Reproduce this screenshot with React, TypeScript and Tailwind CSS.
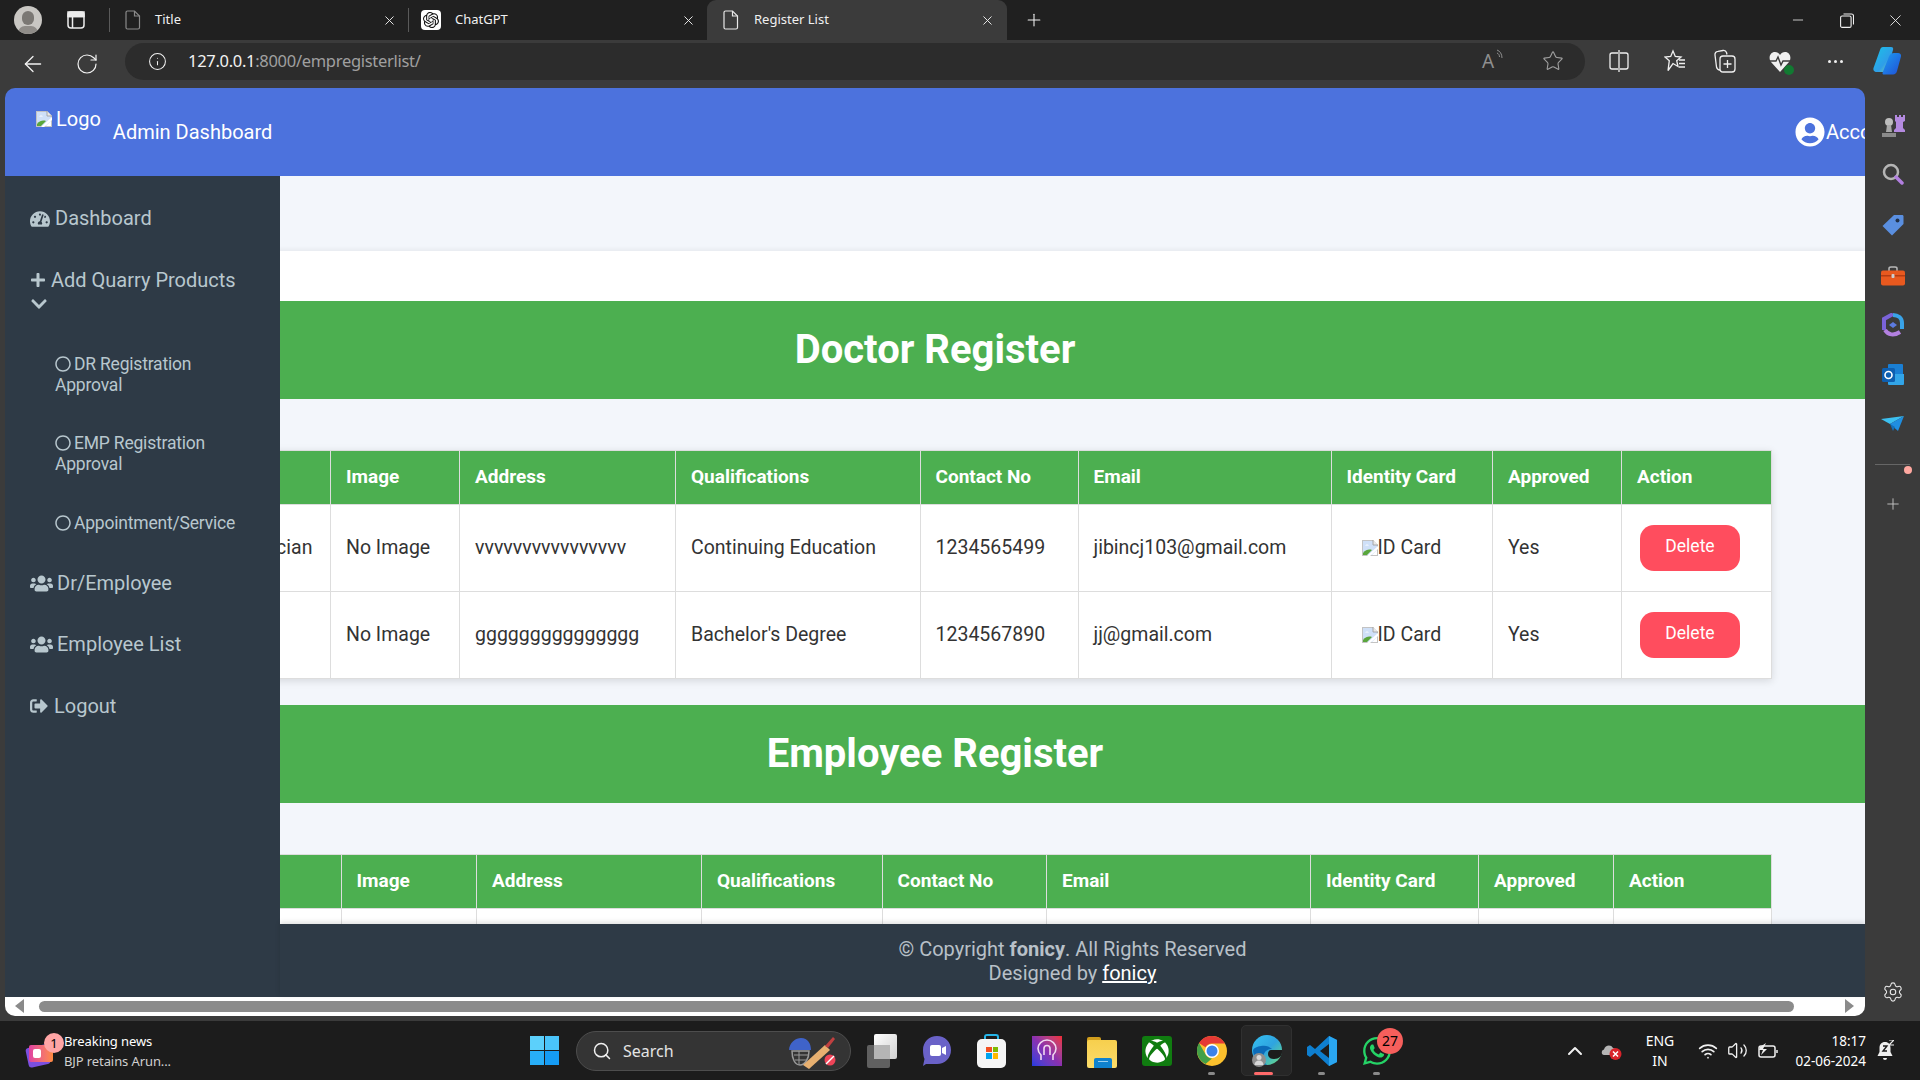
import { FaTachometerAlt, FaPlus, FaChevronDown, FaRegCircle, FaUsers, FaSignOutAlt, FaUserCircle, FaWhatsapp, FaXbox } from "react-icons/fa";
import { SiOpenai } from "react-icons/si";
import { ArrowLeft, RotateCw, Info, Star, X, Plus, Minus, Search, ChevronUp, Settings, Wifi, Volume2 } from "lucide-react";
import type { ReactNode } from "react";

function DocIcon({ dim }: { dim?: boolean }) {
  return (
    <svg width="16" height="20" viewBox="0 0 16 20" fill="none" stroke={dim ? "#8a8a8a" : "#e8e8e8"} strokeWidth="1.2">
      <path d="M2.5 1h7L14.5 6v11.5a1.5 1.5 0 0 1-1.5 1.5H2.5A1.5 1.5 0 0 1 1 17.500V2.500A1.500 1.500 0 0 1 2.500 1Z" />
      <path d="M9.500 1v5h5" />
    </svg>
  );
}

function BrokenImg() {
  return (
    <svg width="16" height="16" viewBox="0 0 16 16" className="inline-block shrink-0">
      <path d="M0 0h11l5 5v11H0Z" fill="#c3c3c3" />
      <path d="M1 1h9.500L15 5.500V15H1Z" fill="#cfe0f8" />
      <path d="M3 5.500c1-1.500 3-1.500 4 0Z" fill="#fff" />
      <path d="M1 15v-2c3-3.500 6-4 9-3l-5 5Z" fill="#5aa63c" />
      <path d="M10 15l5-5v5Z" fill="#fff" />
      <path d="M5 16 16 6v3L8 16Z" fill="#fff" />
      <path d="M11 0v5h5" fill="#e8e8e8" stroke="#9a9a9a" strokeWidth="0.8" />
    </svg>
  );
}

function Copilot() {
  return (
    <svg width="30" height="30" viewBox="0 0 30 30">
      <defs>
        <linearGradient id="cpa" x1="0" y1="0" x2="1" y2="1"><stop offset="0" stopColor="#19c3e8" /><stop offset="0.6" stopColor="#2f9ee8" /><stop offset="1" stopColor="#8fe09a" /></linearGradient>
        <linearGradient id="cpb" x1="0" y1="0" x2="1" y2="1"><stop offset="0" stopColor="#1e9ef0" /><stop offset="1" stopColor="#1f4fd8" /></linearGradient>
      </defs>
      <path d="M11 1h8c2 0 2.500 1 2 3L15 24c-.5 1.500-1.500 2-3 2H5c-3 0-4-2-3.500-4L8 4c.5-2 1.500-3 3-3Z" fill="url(#cpa)" />
      <path d="M22 7h4c2 0 3.500 1.500 3 3.500L25 25c-.5 2-2 3.500-4 3.500h-9c-2 0-1.500-1.500-1-3l6-15c1-2.500 3-3.500 5-3.500Z" fill="url(#cpb)" />
    </svg>
  );
}

function TabStrip() {
  return (
    <div className="h-[40px] bg-[#202020] flex items-stretch text-[13px] text-[#f0f0f0] shrink-0">
      <div className="w-[55px] flex items-center pl-[14px]">
        <div className="relative w-[28px] h-[28px] rounded-full bg-[#c9c7c3] overflow-hidden">
          <div className="absolute left-[8px] top-[5px] w-[12px] h-[14px] rounded-full bg-[#7b7874]" />
          <div className="absolute left-[4px] top-[20px] w-[20px] h-[14px] rounded-full bg-[#8f8c88]" />
        </div>
      </div>
      <div className="w-[54px] flex items-center pl-[12px] border-r border-transparent">
        <svg width="18" height="18" viewBox="0 0 18 18" fill="none" stroke="#ededed" strokeWidth="1.500">
          <rect x="1" y="1" width="16" height="16" rx="3" />
          <path d="M1 5.500h16M5.500 5.500V17" />
          <path d="M1 1h16v4.500H1Z" fill="#ededed" />
        </svg>
      </div>
      <div className="w-[1px] my-[8px] bg-[#5a5a5a]" />
      <div className="w-[298px] flex items-center pl-[15px]">
        <DocIcon dim />
        <span className="ml-[14px] flex-1">Title</span>
        <X size={15} strokeWidth={1.500} className="mr-[11px]" />
      </div>
      <div className="w-[1px] my-[8px] bg-[#5a5a5a]" />
      <div className="w-[298px] flex items-center pl-[12px]">
        <div className="w-[20px] h-[20px] rounded-[4px] bg-white flex items-center justify-center">
          <SiOpenai size={16} color="#111" />
        </div>
        <span className="ml-[14px] flex-1">ChatGPT</span>
        <X size={15} strokeWidth={1.500} className="mr-[11px]" />
      </div>
      <div className="w-[299.500px] bg-[#3b3b3b] rounded-t-[9px] flex items-center pl-[16px]">
        <DocIcon />
        <span className="ml-[15px] flex-1">Register List</span>
        <X size={15} strokeWidth={1.500} className="mr-[12px]" />
      </div>
      <div className="w-[54px] flex items-center pl-[17px]">
        <Plus size={20} strokeWidth={1.300} />
      </div>
      <div className="flex-1" />
      <div className="flex items-center w-[144px]">
        <div className="w-[57px] flex justify-center ml-[-2px]"><Minus size={16} strokeWidth={1.200} /></div>
        <div className="w-[57px] flex justify-center">
          <svg width="14" height="15" viewBox="0 0 14 15" fill="none" stroke="#f0f0f0" strokeWidth="1.100">
            <rect x="0.600" y="3" width="10.500" height="11.400" rx="1.500" />
            <path d="M3.500 1h8a2 2 0 0 1 2 2v8.500" />
          </svg>
        </div>
        <div className="w-[58px] flex justify-center"><X size={19} strokeWidth={1.100} /></div>
      </div>
    </div>
  );
}

function ToolBtn({ w, children }: { w: string; children: ReactNode }) {
  return <div className={`${w} flex items-center justify-center`}>{children}</div>;
}

function Toolbar() {
  return (
    <div className="h-[48px] bg-[#3b3b3b] flex items-center shrink-0 text-[#f2f2f2]">
      <div className="w-[125px] flex items-center pl-[20px] gap-[25px]">
        <ArrowLeft size={26} strokeWidth={1.200} />
        <RotateCw size={24} strokeWidth={1.200} className="ml-[4px]" />
      </div>
      <div className="w-[1460px] h-[37px] mt-[-6px] rounded-full bg-[#2c2c2c] flex items-center pl-[23px] pr-[21px]">
        <Info size={19} strokeWidth={1.300} />
        <div className="ml-[21px] flex-1 text-[16.500px] font-['Noto_Sans','Open_Sans',sans-serif] tracking-[-0.300px]">
          <span>127.0.0.1</span><span className="text-[#a0a0a0]">:8000/empregisterlist/</span>
        </div>
        <div className="relative w-[24px] h-[24px] text-[#8f8f8f] text-[19px] leading-[24px] font-['Noto_Sans',sans-serif] mr-[36px]">
          <span>A</span>
          <svg width="9" height="11" viewBox="0 0 9 11" fill="none" stroke="#8f8f8f" strokeWidth="1" className="absolute left-[14px] top-[0px]">
            <path d="M1 1c3 1 5 4 5 8M1 4c1.500 .5 2.500 2 2.500 4" />
          </svg>
        </div>
        <Star size={22} strokeWidth={1.200} color="#a0a0a0" />
      </div>
      <ToolBtn w="w-[67px] mt-[-6px]">
        <svg width="20" height="22" viewBox="0 0 20 22" fill="none" stroke="#f0f0f0" strokeWidth="1.300">
          <path d="M9 3H3a2 2 0 0 0-2 2v12a2 2 0 0 0 2 2h6M11 3h6a2 2 0 0 1 2 2v12a2 2 0 0 1-2 2h-6M10 0v22" />
        </svg>
      </ToolBtn>
      <ToolBtn w="w-[45px] mt-[-6px]">
        <svg width="22" height="24" viewBox="0 0 22 24" fill="none" stroke="#f0f0f0" strokeWidth="1.300">
          <path d="m9 2 2.300 5.500 5.700.5-4.300 3.700 1.300 5.800L9 14.500 4 21.500l1.300-9.800L1 8l5.700-.5Z" />
          <path d="M15 11h6M15 14.500h6M15 18h6" />
        </svg>
      </ToolBtn>
      <ToolBtn w="w-[56px] mt-[-6px]">
        <svg width="22" height="24" viewBox="0 0 22 24" fill="none" stroke="#f0f0f0" strokeWidth="1.300">
          <path d="M6 21c-2 0-3-1-3.500-3L1 6c-.3-2 1-3.500 3-3.700l5-.8c2-.3 3 .5 3.500 2l.5 2" />
          <rect x="6" y="7" width="15" height="16" rx="3" />
          <path d="M13.500 11v8M9.500 15h8" />
        </svg>
      </ToolBtn>
      <ToolBtn w="w-[54px] mt-[-6px]">
        <div className="relative">
          <svg width="22" height="21" viewBox="0 0 22 21" fill="#f0f0f0">
            <path d="M11 21 2 11C-1 7 1 1 6 1c2 0 4 1 5 3 1-2 3-3 5-3 5 0 7 6 4 10Z" />
            <path d="M1 10h6l2-4 3 8 2-4h7" fill="none" stroke="#3b3b3b" strokeWidth="1.400" />
          </svg>
          <div className="absolute right-[-3px] bottom-[-3px] w-[10px] h-[10px] rounded-full bg-[#127a32]" />
        </div>
      </ToolBtn>
      <ToolBtn w="w-[56px] mt-[-6px]">
        <div className="flex gap-[3px]">
          <div className="w-[3px] h-[3px] rounded-full bg-[#f0f0f0]" />
          <div className="w-[3px] h-[3px] rounded-full bg-[#f0f0f0]" />
          <div className="w-[3px] h-[3px] rounded-full bg-[#f0f0f0]" />
        </div>
      </ToolBtn>
      <ToolBtn w="w-[47px] mt-[-6px]">
        <Copilot />
      </ToolBtn>
    </div>
  );
}

function NavItem({ icon, children }: { icon: ReactNode; children: ReactNode }) {
  return (
    <li className="pl-[25px] py-[19.250px] text-[20px] leading-[23px] text-[#b8c7ce] flex items-center">
      {icon}
      <span>{children}</span>
    </li>
  );
}

function SubItem({ children, extra }: { children: ReactNode; extra?: string }) {
  return (
    <li className={`pl-[50px] pr-[40px] py-[18px] text-[17.500px] leading-[21.500px] tracking-[-0.200px] text-[#b8c7ce] ${extra ?? ""}`}>
      <FaRegCircle size={16} className="inline-block mr-[3px] align-[-2px]" />
      {children}
    </li>
  );
}

function Sidebar() {
  return (
    <nav className="w-[275px] bg-[#2e3a46] shrink-0 pt-[12px] font-['Roboto',sans-serif]">
      <ul>
        <NavItem icon={<FaTachometerAlt size={20} className="mr-[5px]" />}>Dashboard</NavItem>
        <li className="pl-[25px] pt-[19.250px] pb-[20px] text-[20px] leading-[23px] text-[#b8c7ce]">
          <div className="flex items-center">
            <FaPlus size={16} className="mr-[5px]" />
            <span>Add Quarry Products</span>
          </div>
          <div className="h-[24px] flex items-center">
            <FaChevronDown size={18} />
          </div>
        </li>
        <SubItem>DR Registration Approval</SubItem>
        <SubItem>EMP Registration Approval</SubItem>
        <SubItem extra="mt-[1px]">Appointment/Service</SubItem>
        <NavItem icon={<FaUsers size={23} className="mr-[4px]" />}>Dr/Employee</NavItem>
        <NavItem icon={<FaUsers size={23} className="mr-[4px]" />}>Employee List</NavItem>
        <NavItem icon={<FaSignOutAlt size={18} className="mr-[6px]" />}>Logout</NavItem>
      </ul>
    </nav>
  );
}

const th = "border border-[#dddddd] px-[15px] text-left font-bold text-white text-[19px] h-[54px] whitespace-nowrap";
const td = "border border-[#dddddd] px-[15px] text-[19.500px] text-[#333333] h-[87px] whitespace-nowrap bg-white";

function DeleteBtn() {
  return (
    <button className="w-[100px] h-[46px] rounded-[14px] bg-[#ff4d5e] text-white text-[17.500px] pb-[3px] ml-[3px]">Delete</button>
  );
}

function IdCard() {
  return (
    <span className="flex items-center pl-[15px]">
      <BrokenImg />
      <span>ID Card</span>
    </span>
  );
}

const headers = ["Name", "Image", "Address", "Qualifications", "Contact No", "Email", "Identity Card", "Approved", "Action"];

function HeadRow() {
  return (
    <tr className="bg-[#4caf50]">
      {headers.map((h, i) => (
        <th key={h} className={th}>{i === 0 ? "" : h}</th>
      ))}
    </tr>
  );
}

function DoctorTable() {
  return (
    <table className="table-fixed border-collapse w-[1558px] ml-[208px] shadow-[0_2px_8px_rgba(0,0,0,0.12)]">
      <colgroup>
        <col className="w-[117px]" />
        <col className="w-[129px]" />
        <col className="w-[216px]" />
        <col className="w-[244.500px]" />
        <col className="w-[158px]" />
        <col className="w-[253px]" />
        <col className="w-[161.500px]" />
        <col className="w-[129px]" />
        <col className="w-[150px]" />
      </colgroup>
      <thead><HeadRow /></thead>
      <tbody>
        <tr>
          <td className={td}>Physician</td>
          <td className={td}>No Image</td>
          <td className={td}>vvvvvvvvvvvvvvvv</td>
          <td className={td}>Continuing Education</td>
          <td className={td}>1234565499</td>
          <td className={td}>jibincj103@gmail.com</td>
          <td className={td}><IdCard /></td>
          <td className={td}>Yes</td>
          <td className={td}><DeleteBtn /></td>
        </tr>
        <tr>
          <td className={td}></td>
          <td className={td}>No Image</td>
          <td className={td}>ggggggggggggggg</td>
          <td className={td}>Bachelor's Degree</td>
          <td className={td}>1234567890</td>
          <td className={td}>jj@gmail.com</td>
          <td className={td}><IdCard /></td>
          <td className={td}>Yes</td>
          <td className={td}><DeleteBtn /></td>
        </tr>
      </tbody>
    </table>
  );
}

function EmployeeTable() {
  return (
    <table className="table-fixed border-collapse w-[1558px] ml-[208px]">
      <colgroup>
        <col className="w-[127.500px]" />
        <col className="w-[135.500px]" />
        <col className="w-[225px]" />
        <col className="w-[180.600px]" />
        <col className="w-[164.400px]" />
        <col className="w-[264px]" />
        <col className="w-[168px]" />
        <col className="w-[135px]" />
        <col className="w-[158px]" />
      </colgroup>
      <thead><HeadRow /></thead>
      <tbody>
        <tr>
          {headers.map((h) => <td key={h} className={td}></td>)}
        </tr>
      </tbody>
    </table>
  );
}

function Heading({ children }: { children: ReactNode }) {
  return (
    <h2 className="h-[98px] bg-[#4caf50] text-white font-bold text-[40px] flex items-center justify-center">{children}</h2>
  );
}

function Content() {
  return (
    <div className="flex-1 min-h-0 overflow-hidden bg-[#f3f6fb]">
      <div className="w-[1860px] ml-[-275px] font-['Roboto',sans-serif]">
        <div className="h-[75px]" />
        <div className="h-[50px] bg-white shadow-[0_-2px_4px_rgba(0,0,0,0.05)]" />
        <Heading>Doctor Register</Heading>
        <div className="h-[51px]" />
        <DoctorTable />
        <div className="h-[26px]" />
        <Heading>Employee Register</Heading>
        <div className="h-[51px]" />
        <EmployeeTable />
      </div>
    </div>
  );
}

function Footer() {
  return (
    <footer className="relative h-[73px] bg-[#2e3a46] text-[#b8c0c8] text-[20px] leading-[24px] text-center pt-[13px] font-['Roboto',sans-serif] shadow-[0_-2px_5px_rgba(0,0,0,0.12)] shrink-0">
      <div>© Copyright <b>fonicy</b>. All Rights Reserved</div>
      <div>Designed by <span className="text-white underline">fonicy</span></div>
    </footer>
  );
}

function PageScrollbar() {
  return (
    <div className="h-[19px] bg-white flex items-center pl-[8px] pr-[9px] pb-[1px] shrink-0">
      <svg width="12" height="14" viewBox="0 0 12 14"><path d="M11 0v14L2 7Z" fill="#8a8a8a" /></svg>
      <div className="ml-[14px] w-[1755px] h-[11px] rounded-full bg-[#8b8b8b]" />
      <div className="flex-1" />
      <svg width="12" height="14" viewBox="0 0 12 14"><path d="M1 0v14l9-7Z" fill="#8a8a8a" /></svg>
    </div>
  );
}

function SideIcons() {
  return (
    <aside className="w-[55px] bg-[#3b3b3b] flex flex-col items-center pt-[14px] shrink-0">
      <div className="h-[47px] flex items-center">
        <svg width="24" height="24" viewBox="0 0 24 24">
          <circle cx="8" cy="8" r="4" fill="#bdbdbd" />
          <path d="M6 11h4l1 7H5Z" fill="#a8a8a8" />
          <path d="M1 19h14v4H1Z" fill="#8a8a8a" />
          <path d="M14 1h2v2h2V1h2v2h2V1h2v6l-2 1v6l2 2v2H13v-2l2-2V8l-1-1Z" fill="#b48ae0" />
        </svg>
      </div>
      <div className="h-[49px] flex items-center">
        <svg width="22" height="22" viewBox="0 0 22 22" fill="none">
          <circle cx="9" cy="9" r="7" stroke="#b5b5b5" strokeWidth="2.500" />
          <path d="m14 14 6 6" stroke="#b27fe0" strokeWidth="3.500" strokeLinecap="round" />
        </svg>
      </div>
      <div className="h-[53px] flex items-center">
        <svg width="22" height="22" viewBox="0 0 22 22">
          <path d="M12 1h8c1 0 1.500 .5 1.500 1.500V10L10 21.500 .5 12Z" fill="#5a8fe0" />
          <circle cx="15.500" cy="6.500" r="2" fill="#22324a" />
        </svg>
      </div>
      <div className="h-[49px] flex items-center">
        <svg width="24" height="20" viewBox="0 0 24 20">
          <path d="M8 5V2.500C8 1.500 9 1 10 1h4c1 0 2 .5 2 1.500V5" fill="none" stroke="#b8b8b8" strokeWidth="1.500" />
          <rect x="0" y="4.500" width="24" height="15" rx="2" fill="#e8591f" />
          <rect x="0" y="9" width="24" height="1.500" fill="#b43c12" />
          <rect x="10.500" y="8" width="3" height="4" rx="1" fill="#cfcfcf" />
        </svg>
      </div>
      <div className="h-[50px] flex items-center">
        <svg width="22" height="24" viewBox="0 0 22 24" fill="none">
          <path d="M11 1 2 6v11" stroke="#7a63d8" strokeWidth="4" />
          <path d="M11 2c5 0 9 3 9 8v6" stroke="#39a3e8" strokeWidth="4" />
          <path d="M3 17c3 5 9 6 15 2" stroke="#b380e0" strokeWidth="4" />
          <path d="M11 9l4 3-4 3-4-3Z" fill="#5c7be0" />
        </svg>
      </div>
      <div className="h-[49px] flex items-center">
        <svg width="22" height="22" viewBox="0 0 22 22">
          <rect x="6" y="0" width="15" height="11" rx="1" fill="#1a7fd4" />
          <path d="M6 10h16v10a1 1 0 0 1-1 1H7a1 1 0 0 1-1-1Z" fill="#32a5e8" />
          <rect x="0" y="4" width="13" height="14" rx="1.500" fill="#0e5fb0" />
          <circle cx="6.500" cy="11" r="3.500" fill="none" stroke="#fff" strokeWidth="1.600" />
        </svg>
      </div>
      <div className="h-[50px] flex items-center">
        <svg width="23" height="16" viewBox="0 0 23 16">
          <path d="M0 3 23 0 9 8Z" fill="#3cc0f0" />
          <path d="M23 0 17 15 9 8Z" fill="#1f8ee0" />
          <path d="m9 8 3 7 2-4Z" fill="#136fb8" />
        </svg>
      </div>
      <div className="mt-[15px] w-[35px] h-[1px] bg-[#666666]" />
      <div className="relative mt-[30px]">
        <Plus size={18} strokeWidth={1.200} color="#c8c8c8" />
        <div className="absolute left-[20px] top-[-29px] w-[8px] h-[8px] rounded-full bg-[#ffa8a0]" />
      </div>
      <div className="flex-1" />
      <Settings size={22} strokeWidth={1.200} color="#e8e8e8" className="mb-[18px]" />
    </aside>
  );
}

function Slot({ children, dot }: { children: ReactNode; dot?: string }) {
  return (
    <div className="relative w-[55px] h-[59px] flex items-center justify-center shrink-0">
      {children}
      {dot ? <div className={dot} /> : null}
    </div>
  );
}

const dotGrey = "absolute bottom-[5px] left-[24px] w-[7px] h-[3px] rounded-full bg-[#8a8a8a]";

function Taskbar() {
  return (
    <div className="h-[59px] bg-[#1c1c1c] flex items-center text-white font-['Noto_Sans',sans-serif] shrink-0">
      <div className="w-[530px] flex items-center pl-[25px]">
        <div className="relative w-[30px] h-[34px]">
          <div className="absolute left-[2px] top-[12px] w-[22px] h-[20px] bg-[#7b4fe0] rounded-[3px] rotate-[-12deg]" />
          <div className="absolute left-[4px] top-[11px] w-[24px] h-[17px] bg-gradient-to-r from-[#e040a0] to-[#ff8a3c] rounded-[2px]" />
          <div className="absolute left-[8px] top-[15px] w-[8px] h-[9px] bg-white rounded-[2px]" />
          <div className="absolute left-[19px] top-[-1px] w-[20px] h-[20px] rounded-full bg-[#ffa5a5] text-black text-[13px] leading-[20px] text-center">1</div>
        </div>
        <div className="ml-[9px] text-[13px] leading-[20px] tracking-[-0.100px]">
          <div>Breaking news</div>
          <div className="text-[#d0d0d0]">BJP retains Arun...</div>
        </div>
      </div>
      <div className="w-[46px]">
        <div className="grid grid-cols-2 gap-[1px] w-[29px] h-[29px]">
          <div className="bg-[#5cd0fb]" />
          <div className="bg-[#4ac4fa]" />
          <div className="bg-[#28aef8]" />
          <div className="bg-[#159cf5]" />
        </div>
      </div>
      <div className="w-[275px] h-[40px] rounded-full bg-[#343434] border border-[#4d4d4d] flex items-center pl-[15px] text-[16px] text-[#e4e4e4]">
        <Search size={20} strokeWidth={1.800} color="#f0f0f0" />
        <span className="ml-[11px] flex-1">Search</span>
        <svg width="50" height="36" viewBox="0 0 50 36" className="mr-[13px]">
          <path d="M2 18C2 9 9 5 14 5c7 0 10 6 10 12H2Z" fill="#3f63c9" />
          <path d="M5 18h17c0 8-4 14-9 14S5 26 5 18Z" fill="none" stroke="#9a9a9a" strokeWidth="1.500" />
          <path d="M7 22h14M8 27h11M12 18v14" stroke="#9a9a9a" strokeWidth="1" />
          <path d="m16 32 22-20 5 5-21 19Z" fill="#e8b070" />
          <path d="m38 13 8-9 2 2-7 9Z" fill="#c04040" />
          <circle cx="43" cy="27" r="5.500" fill="#ef4458" />
          <path d="m39 31 8-8" stroke="#fff" strokeWidth="1.500" />
        </svg>
      </div>
      <div className="ml-[3px] flex items-center">
        <Slot>
          <div className="relative w-[30px] h-[34px]">
            <div className="absolute left-[0px] top-[11px] w-[23px] h-[23px] bg-[#606060] rounded-[2px]" />
            <div className="absolute left-[7px] top-[0px] w-[23px] h-[25px] bg-gradient-to-br from-white to-[#d0d0d0] rounded-[2px]" />
            <div className="absolute left-[7px] top-[11px] w-[16px] h-[14px] bg-[#b5b5b5]" />
          </div>
        </Slot>
        <Slot>
          <svg width="30" height="32" viewBox="0 0 30 32">
            <path d="M15 1c8 0 14 6 14 14s-6 14-14 14H4l-3 2 1.500-7C1.500 22 1 18 1 15 1 7 7 1 15 1Z" fill="#6a62c8" />
            <rect x="8" y="10" width="11" height="11" rx="2" fill="#fff" />
            <path d="m20 13 4-2v9l-4-2Z" fill="#fff" />
          </svg>
        </Slot>
        <Slot>
          <div className="relative w-[29px] h-[34px]">
            <div className="absolute left-[7px] top-[0px] w-[15px] h-[10px] border-2 border-b-0 border-[#26b5e8] rounded-t-[3px]" />
            <div className="absolute left-[0px] top-[5px] w-[29px] h-[29px] bg-[#f5f5f5] rounded-[5px]" />
            <div className="absolute left-[9px] top-[13px] grid grid-cols-2 gap-[1px] w-[12px] h-[12px]">
              <div className="bg-[#f25022]" /><div className="bg-[#7fba00]" /><div className="bg-[#00a4ef]" /><div className="bg-[#ffb900]" />
            </div>
          </div>
        </Slot>
        <Slot>
          <div className="relative w-[30px] h-[30px] bg-gradient-to-tr from-[#1f3ae0] via-[#8a2fb0] to-[#f02a30] flex items-center justify-center">
            <svg width="20" height="24" viewBox="0 0 20 24" fill="none" stroke="#f0d8f0" strokeWidth="1.600">
              <path d="M4 21V16C2 14 1 12 1 9.500 1 5 5 1 10 1s9 4 9 8.500c0 2.500-1 4.500-3 6.500v5" />
              <path d="M7 16V9.500a3 3 0 0 1 6 0V16" />
            </svg>
          </div>
        </Slot>
        <Slot>
          <div className="relative w-[30px] h-[34px]">
            <div className="absolute left-[0px] top-[3px] w-[14px] h-[8px] bg-[#d19e1d] rounded-t-[2px]" />
            <div className="absolute left-[0px] top-[6px] w-[30px] h-[28px] bg-gradient-to-b from-[#f7cf4d] to-[#fbdc6a] rounded-[2px]" />
            <div className="absolute left-[7px] top-[24px] w-[18px] h-[10px] bg-[#0f82cf] rounded-t-[2px]" />
            <div className="absolute left-[11px] top-[27px] w-[10px] h-[1px] bg-[#9ad0f0]" />
          </div>
        </Slot>
        <Slot>
          <div className="w-[30px] h-[30px] rounded-[3px] bg-[#107c10] flex items-center justify-center">
            <FaXbox size={24} color="#ffffff" />
          </div>
        </Slot>
        <Slot dot={dotGrey}>
          <svg width="30" height="30" viewBox="0 0 30 30">
            <circle cx="15" cy="15" r="15" fill="#fbc02d" />
            <path d="M15 0a15 15 0 0 1 13 7.500H15a7.500 7.500 0 0 0-6.500 3.750L2 7A15 15 0 0 1 15 0Z" fill="#e53935" />
            <path d="M2 7l6.500 11.250A7.500 7.500 0 0 0 15 22.500L8.500 28A15 15 0 0 1 2 7Z" fill="#43a047" />
            <circle cx="15" cy="15" r="7" fill="#fff" />
            <circle cx="15" cy="15" r="5.500" fill="#3b82e8" />
          </svg>
        </Slot>
        <div className="relative w-[55px] h-[59px] flex items-center justify-center shrink-0">
          <div className="absolute left-[2px] right-[2px] top-[4px] bottom-[4px] rounded-[5px] bg-[#262626] border border-[#303030]" />
          <svg width="30" height="32" viewBox="0 0 30 32" className="relative">
            <defs>
              <linearGradient id="eg" x1="0" y1="0" x2="1" y2="1"><stop offset="0" stopColor="#35c1f1" /><stop offset="0.500" stopColor="#2fa4e0" /><stop offset="1" stopColor="#6ddf7c" /></linearGradient>
            </defs>
            <circle cx="15" cy="15" r="15" fill="url(#eg)" />
            <path d="M30 17c0 4-3 7-8 7-4 0-6-2-6-5 0-2 1-4 3-4h11Z" fill="#1c1c1c" />
            <path d="M1 15c0 7 5 14 14 15-4-3-5-7-3-11 1-3 4-5 8-5-3-3-7-4-11-3-4 .5-7 2-8 4Z" fill="#0c6bb8" />
            <circle cx="7" cy="25" r="7" fill="#8f8f8f" />
            <circle cx="7" cy="22.500" r="2.500" fill="#d8d8d8" />
            <path d="M2.500 30c0-3 2-4.500 4.500-4.500s4.500 1.500 4.500 4.500Z" fill="#d8d8d8" />
          </svg>
          <div className="absolute bottom-[5px] left-[15px] w-[19px] h-[3px] rounded-full bg-[#ff6a6a]" />
        </div>
        <Slot dot={dotGrey}>
          <svg width="30" height="32" viewBox="0 0 30 32">
            <path d="M22 1 30 5v22l-8 4L8 18l-5 4-3-2v-8l3-2 5 4Z" fill="#0e7fd0" />
            <path d="M22 1 30 5v22l-8 4Z" fill="#2aa6f0" />
            <path d="M22 9v14l-9-7Z" fill="#1c1c1c" />
          </svg>
        </Slot>
        <Slot dot={dotGrey}>
          <FaWhatsapp size={32} color="#25d366" />
          <div className="absolute left-[28px] top-[7px] w-[26px] h-[26px] rounded-full bg-[#f65f5c] text-black text-[14px] leading-[26px] text-center">27</div>
        </Slot>
      </div>
      <div className="flex-1" />
      <div className="flex items-center">
        <ChevronUp size={24} strokeWidth={2} color="#f0f0f0" className="mr-[14px]" />
        <svg width="22" height="20" viewBox="0 0 22 20" className="mr-[19px]">
          <path d="M3 14c-3 0-3-5 0-5.500C4 4 10 3 12 7c2 0 3 1 3 3v4Z" fill="#b5b5b5" />
          <circle cx="14.500" cy="13" r="6" fill="#d8232a" />
          <path d="m12 10.500 5 5M17 10.500l-5 5" stroke="#fff" strokeWidth="1.500" />
        </svg>
        <div className="w-[36px] text-center text-[14px] leading-[20px]">ENG<br />IN</div>
        <Wifi size={20} strokeWidth={2} color="#f0f0f0" className="ml-[20px]" />
        <Volume2 size={21} strokeWidth={1.500} color="#f0f0f0" className="ml-[9px]" />
        <svg width="20" height="16" viewBox="0 0 20 16" fill="none" stroke="#f0f0f0" strokeWidth="1.500" className="ml-[10px]">
          <rect x="1" y="3" width="16" height="11" rx="2" />
          <path d="M19 7v3" />
          <path d="M2 4 8 0 5 6h4l-6 6 2-5H1Z" fill="#f0f0f0" stroke="none" />
        </svg>
        <div className="w-[88px] text-right text-[13.500px] leading-[20px]">18:17<br />02-06-2024</div>
        <div className="w-[54px] flex justify-center pr-[16px]">
          <svg width="18" height="21" viewBox="0 0 18 21">
            <path d="M9 2c3.500 0 5.500 2.500 5.500 6v4l2 4H1.500l2-4V8C3.500 4.500 5.500 2 9 2Z" fill="#f0f0f0" />
            <path d="M7 18h4a2 2 0 0 1-4 0Z" fill="#f0f0f0" />
            <path d="M7 6h4l-4 5h4" stroke="#1c1c1c" strokeWidth="1.400" fill="none" />
            <path d="M13 0h5l-5 5h5" stroke="#f0f0f0" strokeWidth="1.200" fill="none" />
          </svg>
        </div>
      </div>
    </div>
  );
}

export default function App() {
  return (
    <div className="w-[1920px] h-[1080px] flex flex-col overflow-hidden bg-[#3b3b3b] font-['Noto_Sans',sans-serif]">
      <TabStrip />
      <Toolbar />
      <div className="flex h-[933px] shrink-0">
        <div className="ml-[5px] w-[1860px] h-[928px] flex flex-col rounded-t-[10px] rounded-b-[10px] overflow-hidden">
          <header className="h-[88px] bg-[#4c72dd] text-white font-['Roboto',sans-serif] text-[20px] flex items-start relative shrink-0 overflow-hidden">
            <div className="ml-[31px] mt-[19px] flex items-center h-[24px]">
              <BrokenImg />
              <span className="ml-[4px]">Logo</span>
            </div>
            <span className="ml-[12px] mt-[32px] leading-[24px]">Admin Dashboard</span>
            <div className="flex-1" />
            <div className="flex items-center mt-[29px] w-[70px] overflow-hidden">
              <FaUserCircle size={30} className="shrink-0" />
              <span className="ml-[1px]">Account</span>
            </div>
          </header>
          <div className="flex flex-1 min-h-0">
            <Sidebar />
            <div className="flex-1 min-w-0 flex flex-col">
              <Content />
              <Footer />
            </div>
          </div>
          <PageScrollbar />
        </div>
        <SideIcons />
      </div>
      <Taskbar />
    </div>
  );
}
